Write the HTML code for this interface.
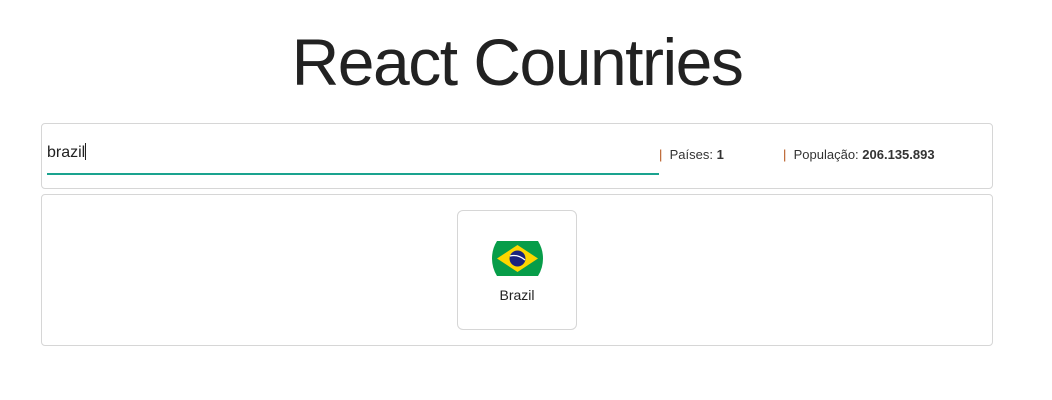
<!DOCTYPE html>
<html><head><meta charset="utf-8"><style>
body{margin:0;width:1052px;height:400px;background:#fff;font-family:"Liberation Sans",sans-serif;color:#222;position:relative;overflow:hidden}
h1{position:absolute;left:0;width:1034px;top:24px;margin:0;text-align:center;font-weight:normal;font-size:66px;line-height:76px;letter-spacing:-1.5px;color:#222}
.box{position:absolute;border:1px solid #d6d6d6;border-radius:4px;box-sizing:border-box}
.t{position:absolute;font-size:14px;color:#333}
</style></head><body>
<h1>React Countries</h1>
<div class="box" style="left:41px;top:123px;width:952px;height:66px"></div>
<div class="t" style="left:47px;top:143px;font-size:16px;color:#222">brazil<span style="display:inline-block;width:1px;height:17px;background:#222;vertical-align:-3px"></span></div>
<div style="position:absolute;left:47px;top:173px;width:612px;height:2px;background:#1aa38f"></div>
<div class="t" style="left:659px;top:147px;font-size:13px"><span style="color:#b5541a">|</span>&nbsp;&nbsp;Países: <b>1</b></div>
<div class="t" style="left:783px;top:147px;font-size:13px"><span style="color:#b5541a">|</span>&nbsp;&nbsp;População: <b>206.135.893</b></div>
<div class="box" style="left:41px;top:194px;width:952px;height:152px"></div>
<div class="box" style="left:457px;top:210px;width:120px;height:120px;border-radius:6px"></div>
<svg style="position:absolute;left:492px;top:241px" width="51" height="35" viewBox="0 0 51 35">
<path d="M5 0H46Q51 8 51 17.5Q51 27 46 35H5Q0 27 0 17.5Q0 8 5 0Z" fill="#079d49"/>
<path d="M25.5 4L46 17.5L25.5 31L5 17.5Z" fill="#fdd600"/>
<circle cx="25.5" cy="17.5" r="8" fill="#1a237e"/>
<path d="M18 15Q26 13 33 19" stroke="#fff" stroke-width="1.3" fill="none"/>
</svg>
<div class="t" style="left:457px;width:120px;text-align:center;top:287px;font-size:14px;color:#222">Brazil</div>
</body></html>
